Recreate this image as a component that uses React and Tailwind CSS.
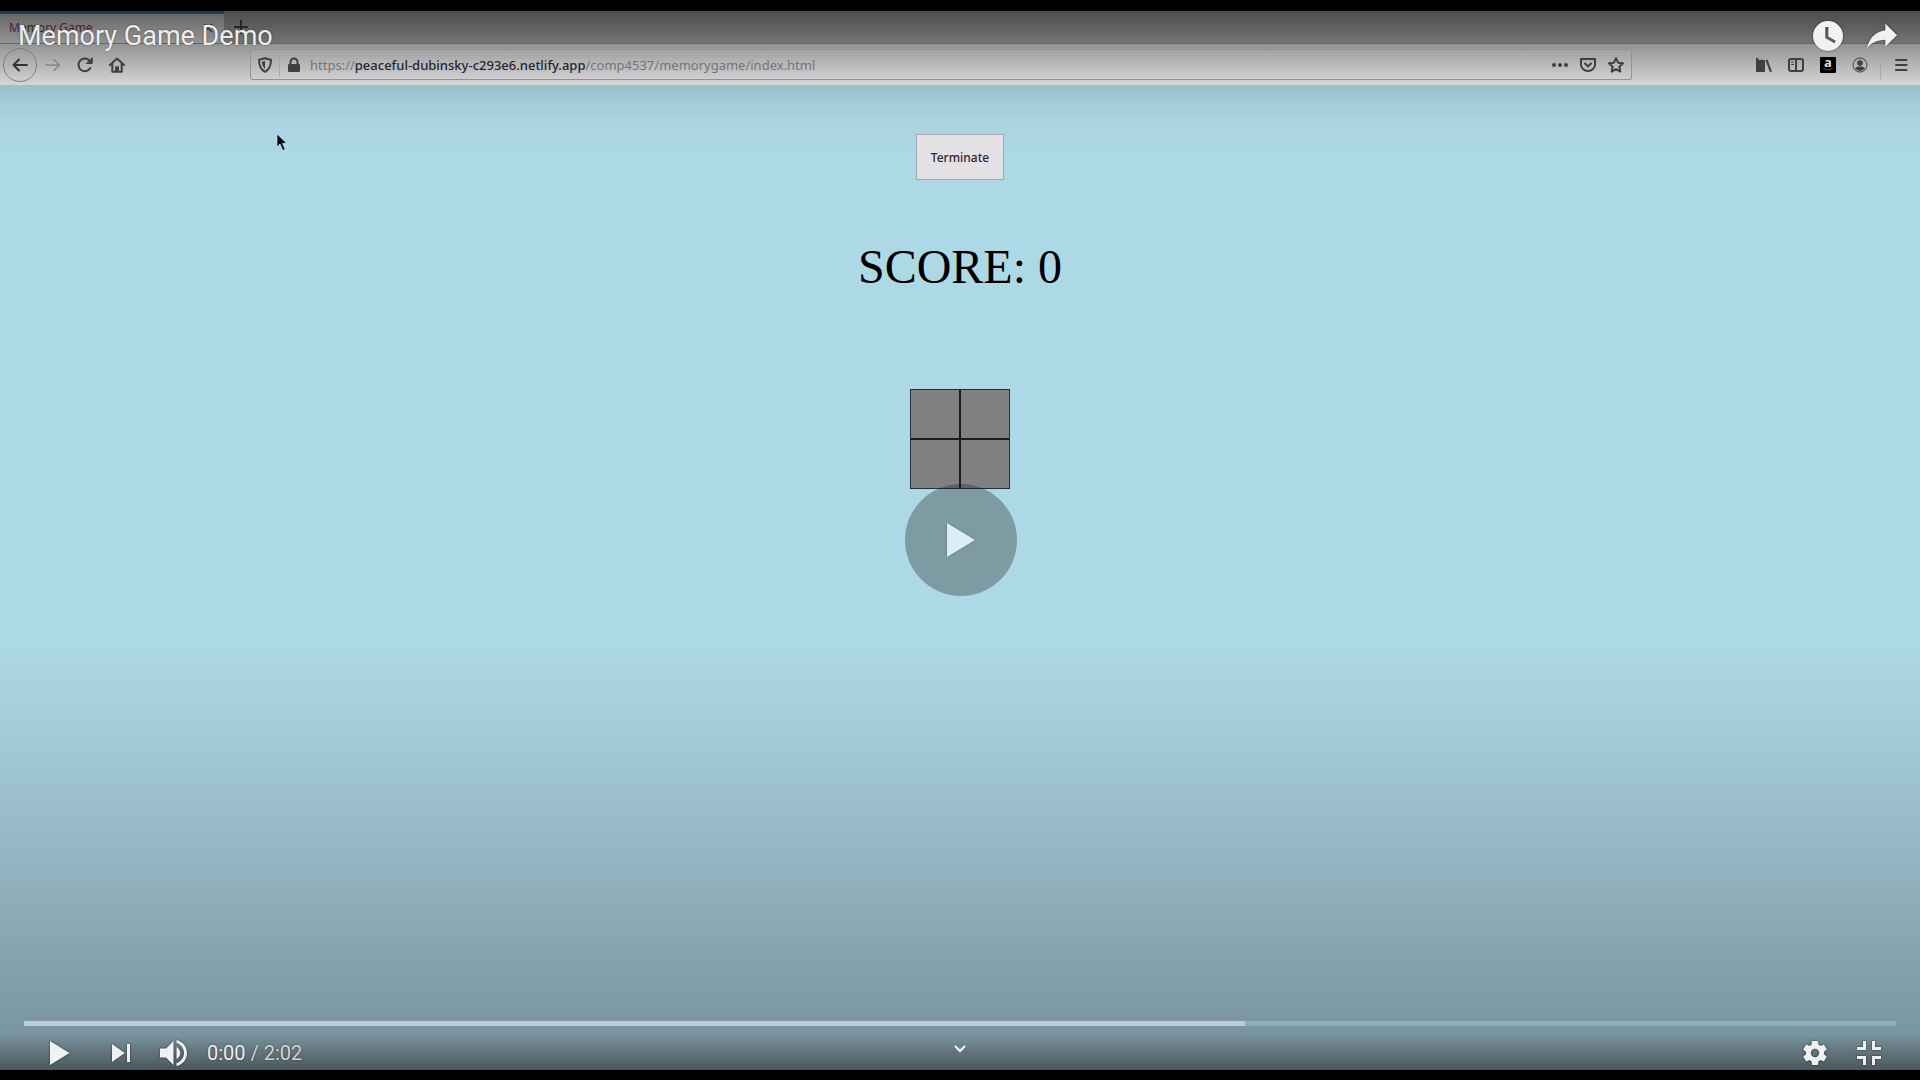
import React from "react";

const ICON = "block h-4 w-4 shrink-0";

function ToolButton({ label, children, className = "" }) {
  return (
    <button type="button" aria-label={label} className={`flex h-8 w-8 shrink-0 items-center justify-center text-[#404040] ${className}`}>
      {children}
    </button>
  );
}

function Line({ children, className = "", strokeWidth = 2 }) {
  return (
    <svg viewBox="0 0 16 16" className={`${ICON} ${className}`} fill="none" stroke="currentColor" strokeWidth={strokeWidth} strokeLinecap="round" strokeLinejoin="round" aria-hidden="true">
      {children}
    </svg>
  );
}

function TabStrip() {
  return (
    <div className="flex h-[33px] border-b border-[#666] bg-linear-to-b from-[#4c4c4c] to-[#747474]">
      <div className="flex w-56 items-center justify-between border-t-3 border-[#1b3a66] bg-linear-to-b from-[#686868] to-[#949494] pr-[11px] pb-[2px] pl-[9px]">
        <span className="font-['Noto_Sans'] text-[12px] leading-4 text-[#41252f]">Memory Game</span>
        <button type="button" aria-label="Close tab" className="text-[#333]">
          <svg viewBox="0 0 10 10" className="block h-[10px] w-[10px]" fill="none" stroke="currentColor" strokeWidth="1.5" aria-hidden="true"><path d="M1 1l8 8M9 1l-8 8" /></svg>
        </button>
      </div>
      <button type="button" aria-label="New tab" className="flex w-[34px] items-center justify-center text-[#262626]">
        <svg viewBox="0 0 14 14" className="block h-[14px] w-[14px]" fill="none" stroke="currentColor" strokeWidth="2" aria-hidden="true"><path d="M7 0v14M0 7h14" /></svg>
      </button>
    </div>
  );
}

function Toolbar() {
  return (
    <div className="flex h-[41px] items-center bg-linear-to-b from-[#949494] to-[#d6d6da] px-[3px]">
      <button type="button" aria-label="Back" className="flex h-[34px] w-[34px] shrink-0 items-center justify-center rounded-full border border-[#7d7d7d] text-[#333]">
        <Line><path d="M15 8H1.500M7 2.500L1.500 8 7 13.500" /></Line>
      </button>
      <ToolButton label="Forward" className="text-[#858585]">
        <Line strokeWidth={1.5}><path d="M1 8h13.500M9 2.500L14.500 8 9 13.500" /></Line>
      </ToolButton>
      <ToolButton label="Reload">
        <Line><path d="M13.300 11A6.300 6.300 0 1 1 12.500 3.600" /><path d="M15.200 1v5.500H9.700z" fill="currentColor" strokeWidth="1" /></Line>
      </ToolButton>
      <ToolButton label="Home">
        <Line><path d="M1 8l7-6.500L15 8M3.300 7v7.800h9.400V7" /><path d="M7 14v-3.800h2V14z" /></Line>
      </ToolButton>
      <div className="mr-[116px] ml-[117px] flex h-[31px] min-w-0 flex-1 items-center rounded-[2px] border border-[#929292] bg-white/5 pr-px text-[#404040]">
        <button type="button" aria-label="Tracking protection" className="flex w-7 justify-center">
          <svg viewBox="0 0 16 16" className={ICON} aria-hidden="true">
            <path d="M8 1.200L14 2.800C14 9 12 12.700 8 14.800 4 12.700 2 9 2 2.800z" fill="none" stroke="currentColor" strokeWidth="2" strokeLinejoin="round" />
            <path d="M8 4v8C5.900 10.300 5 8 5 4.800z" fill="currentColor" />
          </svg>
        </button>
        <span className="h-[22px] w-px bg-[#a5a5a5]" />
        <button type="button" aria-label="Connection is secure" className="flex w-7 justify-center">
          <svg viewBox="0 0 16 16" className={ICON} aria-hidden="true">
            <rect x="2" y="7" width="12" height="8" rx="1" fill="currentColor" />
            <path d="M4.500 8V5a3.500 3.500 0 0 1 7 0v3" fill="none" stroke="currentColor" strokeWidth="2" />
          </svg>
        </button>
        <a href="#address" className="flex-1 truncate pt-px pl-[2px] font-['Noto_Sans'] text-[13px] leading-5 text-[#747474]">
          https://<span className="font-medium text-[#25252f]">peaceful-dubinsky-c293e6.netlify.app</span>/comp4537/memorygame/index.html
        </a>
        <button type="button" aria-label="Page actions" className="flex w-7 justify-center">
          <svg viewBox="0 0 16 16" className={ICON} fill="currentColor" aria-hidden="true"><circle cx="2" cy="8" r="2" /><circle cx="8" cy="8" r="2" /><circle cx="14" cy="8" r="2" /></svg>
        </button>
        <button type="button" aria-label="Save to Pocket" className="flex w-7 justify-center">
          <Line><path d="M1 2h14v5.500a7 6.500 0 0 1-14 0z" /><path d="M5 6.500l3 3 3-3" /></Line>
        </button>
        <button type="button" aria-label="Bookmark" className="flex w-7 justify-center">
          <Line><path d="M8 1.200l2.100 4.500 4.900.6-3.600 3.400.9 4.900L8 12.200l-4.300 2.400.9-4.900L1 6.300l4.900-.6z" /></Line>
        </button>
      </div>
      <ToolButton label="Library">
        <svg viewBox="0 0 16 16" className={ICON} fill="currentColor" aria-hidden="true"><path d="M0 1h2.500v2H5V1.500h.5V3H9v12H0zM9.500 3.200l2-.7L16 14.500l-2 .7z" /></svg>
      </ToolButton>
      <ToolButton label="Sidebars">
        <Line><rect x="1" y="2" width="14" height="12" rx="2" /><path d="M8 2v12" /><path d="M3.500 5h2M3.500 7.500h2" strokeWidth="1" /></Line>
      </ToolButton>
      <ToolButton label="Amazon">
        <span className="flex h-4 w-4 flex-col items-center rounded-[1px] bg-black">
          <span className="font-['Noto_Sans'] text-[13px] leading-[11px] font-bold text-[#ddd]">a</span>
          <svg viewBox="0 0 12 3" className="block h-[3px] w-3" fill="none" stroke="#6d5210" aria-hidden="true"><path d="M1 .5q5 3 10 0" /></svg>
        </span>
      </ToolButton>
      <ToolButton label="Account">
        <svg viewBox="0 0 16 16" className={ICON} aria-hidden="true">
          <circle cx="8" cy="8" r="7" fill="none" stroke="currentColor" strokeWidth="1" />
          <circle cx="8" cy="6" r="2.800" fill="currentColor" /><path d="M3 11q5-3.500 10 0-2 3-5 3t-5-3z" fill="currentColor" />
        </svg>
      </ToolButton>
      <span className="mx-1 h-7 w-px bg-[#a9a9a9]" />
      <ToolButton label="Menu">
        <Line><path d="M3 3h10.500M3 8h10.500M3 13h10.500" /></Line>
      </ToolButton>
    </div>
  );
}

function GamePage() {
  return (
    <main className="flex flex-1 flex-col items-center bg-[#add8e6] bg-[linear-gradient(to_bottom,#9bbfca_0px,#a5cad9_18px,#acd5e3_45px,#add8e6_75px,#add8e6_57%,#9cc0cf_72%,#8cabb6_84%,#7895a0_96.4%,#65777e_98%,#4a585f_100%)] pt-[49px]">
      <button type="button" className="h-[46px] w-[88px] border border-[#a8a8b4] bg-[#e3e1e4] pt-px font-['Noto_Sans'] text-[12px] leading-4 font-medium text-[#33232f]">
        Terminate
      </button>
      <h1 className="mt-[59px] font-['Liberation_Serif'] text-[48px] leading-[56px] text-black">SCORE: 0</h1>
      <div className="mt-[94px] grid grid-cols-2 gap-[2px] border border-[#22303a] bg-[#1b1b1b]">
        {[0, 1, 2, 3].map((n) => (
          <button key={n} type="button" aria-label={`Tile ${n + 1}`} className="h-12 w-12 bg-[#818181]" />
        ))}
      </div>
    </main>
  );
}

function PlayerButton({ label, children }) {
  return (
    <button type="button" aria-label={label} className="h-[34px] w-[54px] shrink-0 text-[#f0f1f2] drop-shadow-[0_0_1px_rgba(0,0,0,0.6)]">
      <svg viewBox="0 7 36 22" className="block h-full w-full overflow-visible" fill="currentColor" aria-hidden="true">{children}</svg>
    </button>
  );
}

function PlayerHeader() {
  return (
    <header className="flex h-[50px] items-center pr-[11px] pl-[18px]">
      <a href="#video" className="flex-1 font-['Roboto'] text-[27px] leading-8 text-[#eee] [text-shadow:0_0_2px_rgba(0,0,0,0.5)]">Memory Game Demo</a>
      <PlayerButton label="Watch later">
        <path fillRule="evenodd" d="M18 8a10 10 0 1 0 0 20 10 10 0 0 0 0-20zM16.200 12h2v6.300l5 2.900-1 1.700-6-3.500z" />
      </PlayerButton>
      <PlayerButton label="Share">
        <path d="m20.200 14.190v-4.450l7.790 7.790-7.790 7.560v-4.560C16.270 20.690 12.100 21.810 9.340 24.760 8.800 25.130 7.600 27.290 8.120 25.650 9.080 21.320 11.800 17.180 15.980 15.380c1.330-.6 2.760-.98 4.210-1.190z" />
      </PlayerButton>
    </header>
  );
}

function PlayerFooter() {
  return (
    <footer className="px-6">
      <div role="progressbar" aria-label="Video progress" aria-valuenow={0} className="h-[5px] bg-white/20">
        <div className="h-full w-[65.2%] bg-white/40" />
      </div>
      <div className="mt-[10px] grid h-[34px] grid-cols-[1fr_auto_1fr] items-center">
        <div className="flex items-center gap-2 pl-2">
          <PlayerButton label="Play">
            <path d="M12 26l6.500-4v-8L12 10zM18.500 22l6.500-4-6.500-4z" />
          </PlayerButton>
          <div className="flex items-center">
            <PlayerButton label="Next">
              <path d="M12 24l8.500-6L12 12zM22 12v12h2V12z" />
            </PlayerButton>
            <PlayerButton label="Mute">
              <path d="M8 21h4l5 5V10l-5 5H8zM19 14v8c1.480-.68 2.500-2.230 2.500-4s-1.020-3.290-2.500-4zM19 9.290v2.060c2.890.86 5 3.540 5 6.650s-2.110 5.850-5 6.710v2.060c4.010-.91 7-4.490 7-8.770s-2.990-7.860-7-8.710z" />
            </PlayerButton>
            <span className="pl-[5px] font-['Roboto'] text-[20px] leading-6 whitespace-nowrap text-[#d2d6d8] [text-shadow:0_0_2px_rgba(0,0,0,0.5)]">
              <span className="text-[#eee]">0:00</span> / 2:02
            </span>
          </div>
        </div>
        <button type="button" aria-label="More videos" className="flex h-[26px] w-6 items-center justify-center self-start text-white">
          <svg viewBox="0 0 12 8" className="block h-2 w-3" fill="none" stroke="currentColor" strokeWidth="2" aria-hidden="true"><path d="M1 1l5 5 5-5" /></svg>
        </button>
        <div className="flex justify-end">
          <PlayerButton label="Settings">
            <path d="m23.940 18.780c.03-.25.05-.51.050-.78s-.02-.52-.05-.78l1.680-1.320c.15-.12.190-.33.090-.51l-1.600-2.760c-.09-.17-.31-.24-.48-.17l-1.990.8c-.41-.32-.86-.58-1.350-.78l-.3-2.120c-.02-.19-.19-.33-.39-.33h-3.200c-.2 0-.36.14-.39.33l-.3 2.120c-.48.2-.93.470-1.350.78l-1.990-.8c-.18-.07-.39 0-.48.170l-1.600 2.760c-.1.170-.05.390.09.510l1.680 1.320c-.03.25-.05.520-.05.780s.02.520.05.780l-1.680 1.320c-.15.120-.19.330-.09.510l1.600 2.760c.09.170.31.240.48.170l1.990-.8c.41.320.86.580 1.350.78l.3 2.120c.02.190.19.330.39.330h3.200c.2 0 .36-.14.390-.33l.3-2.120c.48-.2.930-.47 1.350-.78l1.990.8c.18.070.39 0 .48-.17l1.600-2.760c.09-.17.050-.39-.09-.51zm-5.940 2.010a2.800 2.800 0 1 1 0-5.600 2.800 2.800 0 0 1 0 5.600z" />
          </PlayerButton>
          <PlayerButton label="Exit full screen">
            <path d="M14 14h-4v2h6v-6h-2zM22 14v-4h-2v6h6v-2zM20 26h2v-4h4v-2h-6zM10 22h4v4h2v-6h-6z" />
          </PlayerButton>
        </div>
      </div>
    </footer>
  );
}

export default function App() {
  return (
    <div className="flex min-h-screen flex-col bg-black pt-[11px] pb-[10px] font-['Roboto',sans-serif]">
      <div className="relative flex flex-1 flex-col overflow-hidden">
        <TabStrip />
        <Toolbar />
        <GamePage />
        <svg viewBox="0 0 12 20" className="absolute top-[122px] left-[276px] h-5 w-3" aria-hidden="true">
          <path d="M1 1v13l3-3 2.800 6.500 2.400-1L6.500 10.500l4-.5z" fill="#090d12" stroke="#d8edf3" strokeWidth=".6" />
        </svg>
        <div className="absolute inset-0 flex flex-col justify-between">
          <PlayerHeader />
          <PlayerFooter />
        </div>
        <div className="pointer-events-none absolute inset-0 flex items-center justify-center pb-[2px] pl-[2px]">
          <button type="button" aria-label="Play video" className="pointer-events-auto flex h-28 w-28 items-center justify-center rounded-full bg-[#1e1e1e]/33">
            <svg viewBox="0 0 28 34" className="block h-[34px] w-7 drop-shadow-[0_0_1px_rgba(0,0,0,0.3)]" aria-hidden="true"><path d="M0 0l28 17L0 34z" fill="#dceef5" /></svg>
          </button>
        </div>
      </div>
    </div>
  );
}
